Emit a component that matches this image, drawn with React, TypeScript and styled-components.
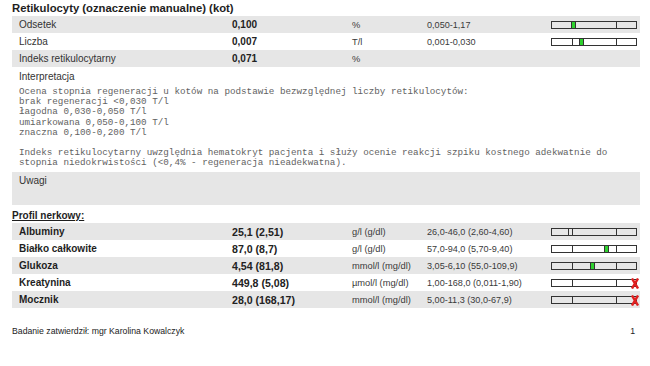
import React from "react";
import styled, { createGlobalStyle } from "styled-components";

const GlobalStyle = createGlobalStyle`
	html, body {
		margin: 0;
		padding: 0;
		background: #ffffff;
	}
	body {
		font-family: "Liberation Sans", Arial, sans-serif;
		color: #2b2b2b;
	}
`;

const Page = styled.div`
	width: 628px;
	padding: 0 10px 0 12px;
	display: flex;
	flex-direction: column;
`;

const SectionTitle = styled.div`
	height: 16px;
	line-height: 16px;
	font-size: 11.3px;
	font-weight: bold;
	color: #1e1e1e;
`;

const Row = styled.div<{ $shaded?: boolean; $bold?: boolean }>`
	display: grid;
	grid-template-columns: 213px 120px 75px 124px 86px;
	align-items: center;
	height: 17px;
	padding-left: 7px;
	background: ${(p) => (p.$shaded ? "#e6e6e6" : "transparent")};
	font-size: 10px;
	color: ${(p) => (p.$bold ? "#1e1e1e" : "#333")};
	font-weight: ${(p) => (p.$bold ? "bold" : "normal")};
`;

const Value = styled.span<{ $large?: boolean }>`
	font-weight: bold;
	font-size: ${(p) => (p.$large ? "10.6px" : "10px")};
	color: #222;
`;

const Unit = styled.span`
	font-size: 9.3px;
	font-weight: normal;
	color: #3a3a3a;
`;

const Range = styled.span`
	font-size: 9.1px;
	font-weight: normal;
	color: #3a3a3a;
`;

const Interp = styled.div`
	padding: 2px 0 8px 7px;
	display: flex;
	flex-direction: column;
	height: 95px;
`;

const InterpLabel = styled.div`
	font-size: 10px;
	line-height: 15px;
	color: #333;
`;

const Mono = styled.pre`
	margin: 3px 0 0;
	font-family: "Liberation Mono", "Courier New", monospace;
	font-size: 9.25px;
	line-height: 10.2px;
	color: #626262;
	white-space: pre;
`;

const Notes = styled.div`
	background: #e6e6e6;
	height: 33px;
	padding: 3px 0 0 7px;
	box-sizing: border-box;
	font-size: 10px;
	color: #333;
`;

const SubHeading = styled.div`
	margin-top: 4px;
	height: 14px;
	line-height: 14px;
	font-size: 10px;
	font-weight: bold;
	text-decoration: underline;
	color: #1e1e1e;
`;

const Footer = styled.div`
	margin-top: 18px;
	display: flex;
	justify-content: space-between;
	font-size: 8.7px;
	color: #222;
	padding-right: 5px;
`;

const BarBox = styled.div`
	position: relative;
	width: 86px;
	height: 8px;
	box-sizing: border-box;
	border: 1px solid #333;
`;

const Tick = styled.div<{ $at: number }>`
	position: absolute;
	top: 0;
	bottom: 0;
	left: ${(p) => p.$at}px;
	width: 1px;
	background: #333;
`;

const Marker = styled.div<{ $fill: boolean }>`
	position: absolute;
	top: -1px;
	height: 8px;
	width: 5px;
	box-sizing: border-box;
	border: 1px solid #333;
	background: ${(p) => (p.$fill ? "#2ed12e" : "transparent")};
`;

const OverMark = styled.svg`
	position: absolute;
	right: -3px;
	top: -2px;
`;

type BarProps = { marker?: number; fill?: boolean; over?: boolean; ticks?: boolean };

const Bar = ({ marker, fill = true, over, ticks = true }: BarProps) => (
	<BarBox>
		{ticks && <Tick $at={20} />}
		<Tick $at={64} />
		{marker !== undefined && <Marker $fill={fill} style={{ left: marker }} />}
		{over && (
			<OverMark width="8" height="11" viewBox="0 0 8 11">
				<path d="M1 0.5 L7 10.5 M7 0.5 L1 10.5" stroke="#e02020" strokeWidth="2.4" fill="none" />
			</OverMark>
		)}
	</BarBox>
);

const interpText = `Ocena stopnia regeneracji u kotów na podstawie bezwzględnej liczby retikulocytów:
brak regeneracji <0,030 T/l
łagodna 0,030-0,050 T/l
umiarkowana 0,050-0,100 T/l
znaczna 0,100-0,200 T/l

Indeks retikulocytarny uwzględnia hematokryt pacjenta i służy ocenie reakcji szpiku kostnego adekwatnie do
stopnia niedokrwistości (<0,4% - regeneracja nieadekwatna).`;

const kidney = [
	{ name: "Albuminy", value: "25,1 (2,51)", unit: "g/l (g/dl)", range: "26,0-46,0 (2,60-4,60)", marker: 16, fill: false },
	{ name: "Białko całkowite", value: "87,0 (8,7)", unit: "g/l (g/dl)", range: "57,0-94,0 (5,70-9,40)", marker: 52, fill: true },
	{ name: "Glukoza", value: "4,54 (81,8)", unit: "mmol/l (mg/dl)", range: "3,05-6,10 (55,0-109,9)", marker: 38, fill: true },
	{ name: "Kreatynina", value: "449,8 (5,08)", unit: "µmol/l (mg/dl)", range: "1,00-168,0 (0,011-1,90)", over: true },
	{ name: "Mocznik", value: "28,0 (168,17)", unit: "mmol/l (mg/dl)", range: "5,00-11,3 (30,0-67,9)", over: true },
];

export default function App() {
	return (
		<>
			<GlobalStyle />
			<Page>
				<SectionTitle>Retikulocyty (oznaczenie manualne) (kot)</SectionTitle>
				<Row $shaded>
					<span>Odsetek</span>
					<Value>0,100</Value>
					<Unit>%</Unit>
					<Range>0,050-1,17</Range>
					<Bar marker={19} ticks={false} />
				</Row>
				<Row>
					<span>Liczba</span>
					<Value>0,007</Value>
					<Unit>T/l</Unit>
					<Range>0,001-0,030</Range>
					<Bar marker={27} />
				</Row>
				<Row $shaded>
					<span>Indeks retikulocytarny</span>
					<Value>0,071</Value>
					<Unit>%</Unit>
				</Row>
				<Interp>
					<InterpLabel>Interpretacja</InterpLabel>
					<Mono>{interpText}</Mono>
				</Interp>
				<Notes>Uwagi</Notes>
				<SubHeading>Profil nerkowy:</SubHeading>
				{kidney.map((r, i) => (
					<Row key={r.name} $shaded={i % 2 === 0} $bold>
						<span>{r.name}</span>
						<Value $large>{r.value}</Value>
						<Unit>{r.unit}</Unit>
						<Range>{r.range}</Range>
						<Bar marker={r.marker} fill={r.fill} over={r.over} />
					</Row>
				))}
				<Footer>
					<span>Badanie zatwierdził: mgr Karolina Kowalczyk</span>
					<span>1</span>
				</Footer>
			</Page>
		</>
	);
}
